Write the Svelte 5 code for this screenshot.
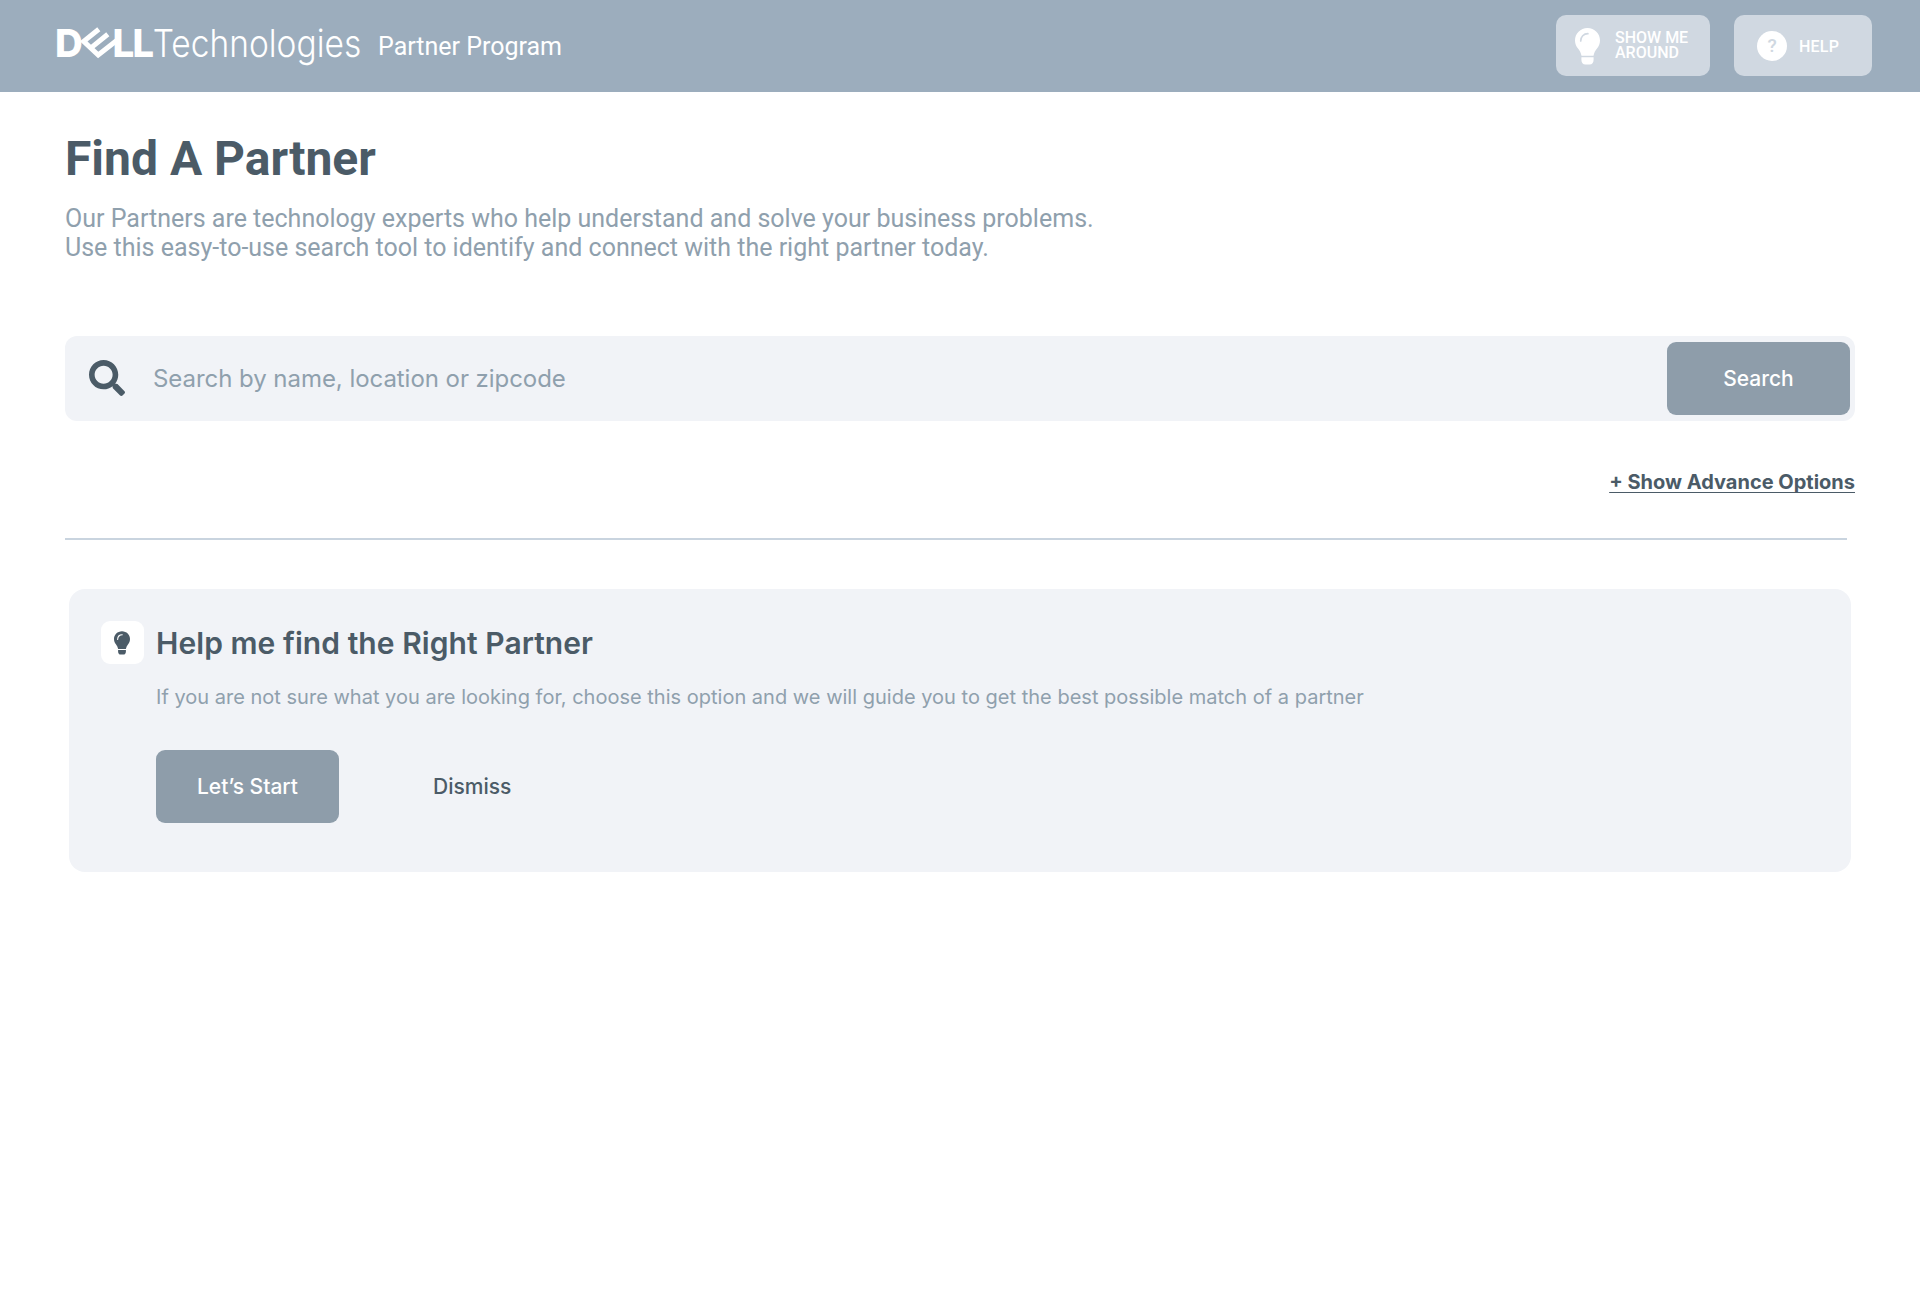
<script>
  const description =
    'If you are not sure what you are looking for, choose this option and we will guide you to get the best possible match of a partner';
</script>

{#snippet bulb(cls)}
  <svg class={cls} viewBox="0 0 25 37" aria-hidden="true">
    <path class="body" d="M12.5 0C5.4 0 0 5.6 0 12.4c0 3.300 1.200 6 3.200 8.400 1.500 1.900 2.700 4.100 3.300 6.900h12c.6-2.800 1.800-5 3.300-6.900 2-2.400 3.200-5.100 3.200-8.400C25 5.600 19.600 0 12.500 0z" />
    <path class="body" d="M6.400 29.300h12.200v2.400c0 2.900-1.500 4.900-4 4.900h-4.200c-2.500 0-4-2-4-4.900z" />
    <path class="shine" d="M5.700 13c0-4.200 3-7.300 7.200-7.300" />
  </svg>
{/snippet}

<header>
  <div class="brand">
    <svg class="logo" viewBox="54 16 310 60" role="img" aria-label="Dell Technologies">
      <text class="dell" x="54.900" y="57.300">D</text>
      <path class="tilted-e" d="M98.800 29.200L83.700 41.300L98.200 55L117 40.300M91 47.900L107.800 34.300" />
      <text class="dell" x="112.600" y="57.300">L</text>
      <text class="dell" x="132.400" y="57.300" textLength="21.500" lengthAdjust="spacingAndGlyphs">L</text>
      <text class="tech" x="152.700" y="57.300" textLength="208.500" lengthAdjust="spacingAndGlyphs">Technologies</text>
    </svg>
    <span class="program">Partner Program</span>
  </div>
  <nav>
    <button class="tool around">
      {@render bulb('bulb-large')}
      <span>SHOW ME<br />AROUND</span>
    </button>
    <button class="tool help">
      <span class="question">?</span>
      <span class="help-label">HELP</span>
    </button>
  </nav>
</header>

<main>
  <h1>Find A Partner</h1>
  <p class="intro">
    Our Partners are technology experts who help understand and solve your business problems.<br />
    Use this easy-to-use search tool to identify and connect with the right partner today.
  </p>

  <div class="search">
    <svg class="lens" viewBox="0 0 512 512" aria-hidden="true">
      <path d="M505 442.700L405.300 343c-4.500-4.500-10.600-7-17-7H372c27.600-35.300 44-79.700 44-128C416 93.100 322.900 0 208 0S0 93.100 0 208s93.100 208 208 208c48.300 0 92.700-16.400 128-44v16.300c0 6.400 2.500 12.500 7 17l99.700 99.700c9.400 9.400 24.600 9.400 33.900 0l28.300-28.300c9.400-9.400 9.400-24.600.1-34zM208 336c-70.700 0-128-57.200-128-128 0-70.700 57.200-128 128-128 70.700 0 128 57.200 128 128 0 70.700-57.200 128-128 128z" />
    </svg>
    <span class="placeholder">Search by name, location or zipcode</span>
    <button class="primary">Search</button>
  </div>

  <div class="options"><a href="#advanced">+ Show Advance Options</a></div>
  <hr />

  <section class="card">
    <div class="card-head">
      <span class="badge">{@render bulb('bulb-small')}</span>
      <h2>Help me find the Right Partner</h2>
    </div>
    <p class="desc">{description}</p>
    <div class="actions">
      <button class="primary">Let’s Start</button>
      <button class="dismiss">Dismiss</button>
    </div>
  </section>
</main>

<style>
  :global(body) {
    background: #fff;
    font-family: Inter, sans-serif;
  }
  h1, h2, p, hr, button {
    margin: 0;
    padding: 0;
    border: 0;
  }
  button {
    background: none;
    font-family: inherit;
  }
  header {
    box-sizing: border-box;
    height: 92px;
    padding: 0 48px 0 54px;
    display: flex;
    justify-content: space-between;
    align-items: center;
    background: #9cadbd;
    color: #fff;
    font-family: Roboto, sans-serif;
  }
  .brand {
    display: flex;
    align-items: center;
    gap: 14px;
  }
  .logo {
    width: 310px;
    height: 60px;
    overflow: visible;
    fill: #fff;
  }
  .dell {
    font: 800 38.500px Inter, sans-serif;
  }
  .tech {
    font: 300 38.500px Inter, sans-serif;
  }
  .tilted-e {
    fill: none;
    stroke: #fff;
    stroke-width: 5;
  }
  .program {
    font-size: 25px;
    line-height: 30px;
    padding-top: 2px;
  }
  nav {
    display: flex;
    gap: 24px;
    padding-bottom: 1px;
  }
  .tool {
    box-sizing: border-box;
    height: 61px;
    display: flex;
    align-items: center;
    border-radius: 10px;
    background: #d0d8e1;
    color: #fff;
    font-size: 16px;
    font-weight: 500;
    line-height: 15px;
    text-align: left;
  }
  .around {
    width: 154px;
    padding-left: 19px;
    gap: 15px;
  }
  .around span {
    padding-bottom: 1px;
  }
  .help {
    width: 138px;
    padding-left: 23px;
    gap: 12px;
  }
  .help-label {
    padding-top: 2px;
    letter-spacing: 0.2px;
  }
  .bulb-large {
    width: 25px;
    height: 37px;
    padding-top: 2px;
    fill: #fff;
    stroke: #d0d8e1;
  }
  .bulb-small {
    width: 16px;
    height: 24px;
    margin-right: 1px;
    fill: #4b5b67;
    stroke: #fff;
  }
  .body {
    stroke: none;
  }
  .shine {
    fill: none;
    stroke-width: 1.700;
    stroke-linecap: round;
  }
  .question {
    width: 30px;
    height: 30px;
    border-radius: 50%;
    background: #fff;
    color: #d0d8e1;
    font-size: 19px;
    font-weight: 500;
    line-height: 30px;
    text-align: center;
  }
  main {
    padding: 39px 65px 0;
    color: #4b5b67;
  }
  h1 {
    font: 700 48px/56px Roboto, sans-serif;
  }
  .intro {
    margin-top: 17px;
    font: 400 25px/29px Roboto, sans-serif;
    color: #8fa0ad;
  }
  .search {
    box-sizing: border-box;
    height: 85px;
    margin-top: 74px;
    padding: 0 5px 0 24px;
    display: flex;
    align-items: center;
    border-radius: 12px;
    background: #f1f3f7;
  }
  .lens {
    width: 36px;
    height: 36px;
    margin-bottom: 2px;
    fill: #4b5b67;
  }
  .placeholder {
    flex: 1;
    margin-left: 28px;
    font-size: 24px;
    line-height: 30px;
    letter-spacing: -0.05px;
    color: #8fa0ad;
  }
  .primary {
    width: 183px;
    height: 73px;
    border-radius: 9px;
    background: #8e9daa;
    color: #fff;
    font-size: 21px;
    font-weight: 500;
    line-height: 26px;
  }
  .options {
    margin-top: 49px;
    display: flex;
    justify-content: flex-end;
  }
  .options a {
    color: inherit;
    font-size: 20px;
    font-weight: 700;
    line-height: 24px;
    text-decoration: underline;
    text-decoration-thickness: 1px;
    text-decoration-skip-ink: none;
    text-underline-offset: 3px;
  }
  hr {
    height: 2px;
    margin: 44px 8px 0 0;
    background: #c9d4df;
  }
  .card {
    box-sizing: border-box;
    height: 283px;
    margin: 49px 4px 0;
    padding: 32px 32px 0;
    border-radius: 16px;
    background: #f1f3f7;
  }
  .card-head {
    display: flex;
    align-items: center;
    gap: 12px;
  }
  .badge {
    width: 43px;
    height: 43px;
    display: flex;
    align-items: center;
    justify-content: center;
    border-radius: 9px;
    background: #fff;
  }
  h2 {
    font-size: 30px;
    font-weight: 600;
    line-height: 36px;
    letter-spacing: 0.06px;
  }
  .desc {
    margin: 21px 0 0 55px;
    font-size: 20px;
    line-height: 24px;
    letter-spacing: 0.01px;
    color: #8fa0ad;
  }
  .actions {
    margin: 41px 0 0 55px;
    display: flex;
    align-items: center;
    gap: 94px;
  }
  .dismiss {
    color: #4b5b67;
    font-size: 21px;
    font-weight: 500;
    line-height: 26px;
  }
</style>
